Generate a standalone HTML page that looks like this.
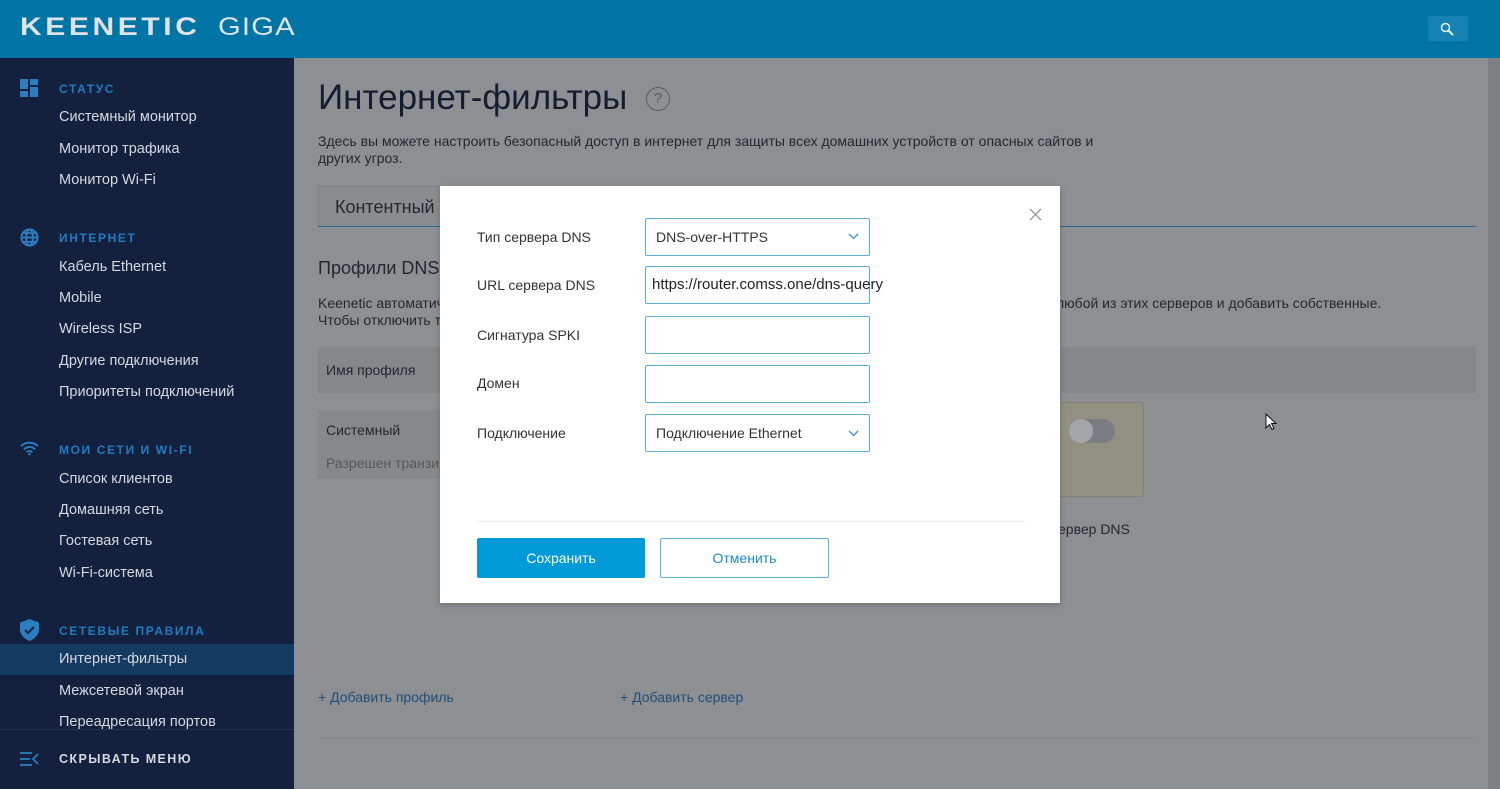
<!DOCTYPE html>
<html><head><meta charset="utf-8">
<style>
*{box-sizing:border-box;margin:0;padding:0}
body{width:1500px;height:789px;overflow:hidden;font-family:"Liberation Sans",Arial,sans-serif;background:#8e8f93;position:relative;color:#222}
.a{position:absolute;white-space:nowrap}
#hdr{left:0;top:0;width:1500px;height:58px;background:#0074a5}
#side{left:0;top:58px;width:294px;height:731px;background:#13213f}
.sh{position:absolute;left:59px;font-size:12px;font-weight:bold;letter-spacing:1.6px;color:#1f7cbf}
.si{position:absolute;left:59px;font-size:14.5px;color:#d6d8de}
.ic{position:absolute;left:20px}
.t{color:#24272e}
.inp{position:absolute;left:645px;width:225px;height:38px;border:1px solid #5aaed8;border-radius:2px;background:#fff}
.lbl{position:absolute;left:477px;font-size:14px;color:#333}
</style></head><body>
<div class="a" id="hdr"></div>
<div class="a" style="left:20px;top:13px;font-size:25px;font-weight:bold;letter-spacing:3px;color:#dfe3e8;transform:scaleX(1.2);transform-origin:left">KEENETIC</div>
<div class="a" style="left:218px;top:13px;font-size:25px;letter-spacing:1px;color:#dfe3e8;transform:scaleX(1.17);transform-origin:left">GIGA</div>
<div class="a" style="left:1428px;top:16px;width:40px;height:25px;background:#1582b3;border-radius:2px"></div>
<svg class="a" style="left:1440px;top:22px" width="14" height="14" viewBox="0 0 14 14"><circle cx="5.5" cy="5.5" r="4" stroke="#e6eef4" stroke-width="1.6" fill="none"/><path d="M8.5 8.5L13 13" stroke="#e6eef4" stroke-width="2"/></svg>

<div class="a" id="side">
<div class="a" style="left:0;top:586px;width:294px;height:31px;background:#153a62"></div>
<div class="a" style="left:0;top:671px;width:294px;height:1px;background:#26344f"></div>
</div>
<svg class="ic" style="top:79px" width="19" height="19" viewBox="0 0 19 19" fill="#2b7fc1"><rect x="0" y="0" width="8" height="10"/><rect x="10" y="0" width="8" height="6"/><rect x="0" y="12" width="8" height="6"/><rect x="10" y="8" width="8" height="10"/></svg>
<div class="sh" style="top:82px">СТАТУС</div>
<div class="si" style="top:109px">Системный монитор</div>
<div class="si" style="top:141px">Монитор трафика</div>
<div class="si" style="top:172px">Монитор Wi-Fi</div>
<svg class="ic" style="top:228px" width="19" height="19" viewBox="0 0 20 20" fill="none" stroke="#2b7fc1" stroke-width="2"><circle cx="10" cy="10" r="8.5"/><ellipse cx="10" cy="10" rx="3.5" ry="8.5"/><path d="M1.5 10h17M3 5.5h14M3 14.5h14"/></svg>
<div class="sh" style="top:231px">ИНТЕРНЕТ</div>
<div class="si" style="top:259px">Кабель Ethernet</div>
<div class="si" style="top:290px">Mobile</div>
<div class="si" style="top:321px">Wireless ISP</div>
<div class="si" style="top:353px">Другие подключения</div>
<div class="si" style="top:384px">Приоритеты подключений</div>
<svg class="ic" style="top:441px" width="19" height="15" viewBox="0 0 20 15" fill="none" stroke="#2b7fc1" stroke-width="2"><path d="M1 5a13 13 0 0 1 18 0M4 8.5a8.5 8.5 0 0 1 12 0M7 11.5a4 4 0 0 1 6 0"/><circle cx="10" cy="13.5" r="1.3" fill="#2b7fc1" stroke="none"/></svg>
<div class="sh" style="top:443px">МОИ СЕТИ И WI-FI</div>
<div class="si" style="top:471px">Список клиентов</div>
<div class="si" style="top:502px">Домашняя сеть</div>
<div class="si" style="top:533px">Гостевая сеть</div>
<div class="si" style="top:565px">Wi-Fi-система</div>
<svg class="ic" style="top:619px" width="19" height="22" viewBox="0 0 19 22"><path d="M9.5 0L19 3.5V10c0 6-4.5 10-9.5 12C4.5 20 0 16 0 10V3.5z" fill="#2b7fc1"/><path d="M5 11l3 3 6-6" stroke="#13213f" stroke-width="2" fill="none"/></svg>
<div class="sh" style="top:624px">СЕТЕВЫЕ ПРАВИЛА</div>
<div class="si" style="top:651px">Интернет-фильтры</div>
<div class="si" style="top:683px">Межсетевой экран</div>
<div class="si" style="top:714px">Переадресация портов</div>
<svg class="ic" style="top:752px" width="19" height="14" viewBox="0 0 19 14" fill="none" stroke="#2b7fc1" stroke-width="1.8"><path d="M0 1h12M0 7h10M0 13h12M18 2l-5 5 5 5"/></svg>
<div class="si" style="top:752px;font-size:12.5px;font-weight:bold;letter-spacing:1.4px;color:#d6d8de">СКРЫВАТЬ МЕНЮ</div>

<div class="a" style="left:1488px;top:58px;width:12px;height:731px;background:#7f8084"></div>
<div class="a t" style="left:318px;top:78px;font-size:35px;color:#141c30">Интернет-фильтры</div>
<div class="a" style="left:646px;top:87px;width:24px;height:24px;border:1px solid #5b5d63;border-radius:50%;font-size:15px;color:#5b5d63;text-align:center;line-height:22px">?</div>
<div class="a t" style="left:318px;top:133px;font-size:14px;line-height:17px">Здесь вы можете настроить безопасный доступ в интернет для защиты всех домашних устройств от опасных сайтов и<br>других угроз.</div>
<div class="a" style="left:318px;top:186px;width:130px;height:41px;border:1px solid #7d7f84;border-bottom:none;background:#8b8c90"></div>
<div class="a t" style="left:335px;top:197px;font-size:18px">Контентный</div>
<div class="a" style="left:318px;top:226px;width:1158px;height:1px;background:#216a98"></div>
<div class="a t" style="left:318px;top:258px;font-size:18px">Профили DNS</div>
<div class="a t" style="left:318px;top:295px;font-size:14px;line-height:17px">Keenetic автоматич<br>Чтобы отключить т</div>
<div class="a t" style="left:1056px;top:295px;font-size:14px">любой из этих серверов и добавить собственные.</div>
<div class="a" style="left:318px;top:347px;width:1158px;height:46px;background:#86878b"></div>
<div class="a t" style="left:326px;top:362px;font-size:14px">Имя профиля</div>
<div class="a" style="left:318px;top:410px;width:130px;height:69px;background:#87888c"></div>
<div class="a t" style="left:326px;top:422px;font-size:14px">Системный</div>
<div class="a" style="left:326px;top:455px;font-size:14px;color:#55575c">Разрешен транзи</div>
<div class="a" style="left:1040px;top:402px;width:104px;height:95px;background:#929081;border:1px solid #838278;border-radius:2px"></div>
<div class="a" style="left:1069px;top:419px;width:46px;height:24px;border-radius:12px;background:#7c7d82"></div>
<div class="a" style="left:1069px;top:419px;width:24px;height:24px;border-radius:50%;background:#a4a5a8"></div>
<div class="a t" style="left:1058px;top:521px;font-size:14px">ервер DNS</div>
<div class="a" style="left:318px;top:689px;font-size:14px;color:#1f4f7a">+ Добавить профиль</div>
<div class="a" style="left:620px;top:689px;font-size:14px;color:#1f4f7a">+ Добавить сервер</div>
<div class="a" style="left:318px;top:738px;width:1158px;height:1px;background:#85868a"></div>
<svg class="a" style="left:1265px;top:413px" width="12" height="18" viewBox="0 0 12 18"><path d="M1 1v14l3.5-3.5 2.5 5 2-1-2.5-5H11z" fill="#fff" stroke="#111" stroke-width="1"/></svg>

<div class="a" style="left:440px;top:186px;width:620px;height:417px;background:#fff;box-shadow:0 2px 6px rgba(0,0,0,.2)"></div>
<svg class="a" style="left:1029px;top:208px" width="13" height="13" viewBox="0 0 13 13" stroke="#999" stroke-width="1.3"><path d="M1 1l11 11M12 1L1 12"/></svg>
<div class="lbl" style="top:229px">Тип сервера DNS</div>
<div class="lbl" style="top:277px">URL сервера DNS</div>
<div class="lbl" style="top:327px">Сигнатура SPKI</div>
<div class="lbl" style="top:375px">Домен</div>
<div class="lbl" style="top:425px">Подключение</div>
<div class="inp" style="top:218px"></div>
<div class="a" style="left:656px;top:229px;font-size:14px;color:#333">DNS-over-HTTPS</div>
<svg class="a" style="left:848px;top:233px" width="11" height="7" viewBox="0 0 11 7" fill="none" stroke="#3b8fc4" stroke-width="1.3"><path d="M1 1l4.5 4.5L10 1"/></svg>
<div class="inp" style="top:266px"></div>
<div class="a" style="left:652px;top:276px;font-size:15px;color:#222">https://router.comss.one/dns-query</div>
<div class="inp" style="top:316px"></div>
<div class="inp" style="top:365px"></div>
<div class="inp" style="top:414px"></div>
<div class="a" style="left:656px;top:425px;font-size:14px;color:#333">Подключение Ethernet</div>
<svg class="a" style="left:848px;top:430px" width="11" height="7" viewBox="0 0 11 7" fill="none" stroke="#3b8fc4" stroke-width="1.3"><path d="M1 1l4.5 4.5L10 1"/></svg>
<div class="a" style="left:477px;top:521px;width:548px;height:1px;background:#eee"></div>
<div class="a" style="left:477px;top:538px;width:168px;height:40px;background:#009ad8;border-radius:2px;color:#fff;font-size:14px;text-align:center;line-height:40px">Сохранить</div>
<div class="a" style="left:660px;top:538px;width:169px;height:40px;border:1px solid #5ab3de;border-radius:2px;color:#1a8cc9;font-size:14px;text-align:center;line-height:38px">Отменить</div>
</body></html>
